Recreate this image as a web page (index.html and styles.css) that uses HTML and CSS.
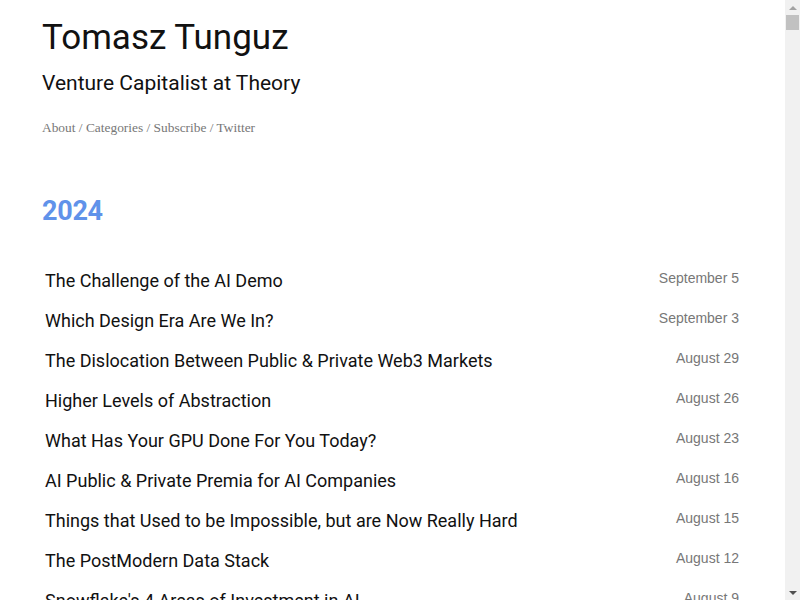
FILE: index.html
```html
<!DOCTYPE html>
<html>
<head>
	<title>Tomasz Tunguz</title>
	<link rel="stylesheet" href="styles.css">
</head>
<body>
	<div class="viewport">
		<div class="page">
			<header class="masthead">
				<h1 class="site-title">Tomasz Tunguz</h1>
				<p class="site-tagline">Venture Capitalist at Theory</p>
				<nav class="site-nav">
					<a href="#">About</a> / <a href="#">Categories</a> / <a href="#">Subscribe</a> / <a href="#">Twitter</a>
				</nav>
			</header>

			<section class="year">
				<h2 class="year-title">2024</h2>
				<ul class="posts">
					<li class="post"><a href="#">The Challenge of the AI Demo</a><span class="post-date">September 5</span></li>
					<li class="post"><a href="#">Which Design Era Are We In?</a><span class="post-date">September 3</span></li>
					<li class="post"><a href="#">The Dislocation Between Public &amp; Private Web3 Markets</a><span class="post-date">August 29</span></li>
					<li class="post"><a href="#">Higher Levels of Abstraction</a><span class="post-date">August 26</span></li>
					<li class="post"><a href="#">What Has Your GPU Done For You Today?</a><span class="post-date">August 23</span></li>
					<li class="post"><a href="#">AI Public &amp; Private Premia for AI Companies</a><span class="post-date">August 16</span></li>
					<li class="post"><a href="#">Things that Used to be Impossible, but are Now Really Hard</a><span class="post-date">August 15</span></li>
					<li class="post"><a href="#">The PostModern Data Stack</a><span class="post-date">August 12</span></li>
					<li class="post"><a href="#">Snowflake's 4 Areas of Investment in AI</a><span class="post-date">August 9</span></li>
					<li class="post"><a href="#">The Tail That Wags the Dog</a><span class="post-date">August 7</span></li>
					<li class="post"><a href="#">How Many Startups Raise a Series A?</a><span class="post-date">August 5</span></li>
					<li class="post"><a href="#">The Rise of the Small Model</a><span class="post-date">August 1</span></li>
				</ul>
			</section>
		</div>
	</div>
	<div class="scrollbar">
		<span class="scroll-arrow up"></span>
		<span class="scroll-thumb"></span>
		<span class="scroll-track"></span>
		<span class="scroll-arrow down"></span>
	</div>
</body>
</html>
```

FILE: styles.css
```css
* {
	box-sizing: border-box;
	margin: 0;
	padding: 0;
}

html, body {
	height: 100%;
	overflow: hidden;
}

body {
	display: flex;
	background-color: #fff;
	color: #111;
	font-family: 'Roboto', 'Noto Sans', sans-serif;
}

a {
	color: inherit;
	text-decoration: none;
}

.viewport {
	flex: 1;
	height: 100%;
	overflow: hidden;
}

.page {
	max-width: 701px;
	margin: 0 auto;
	padding-bottom: 60px;
}

.masthead {
	padding-top: 15px;
}

.site-title {
	font-size: 35px;
	font-weight: 400;
	line-height: 46px;
	color: #111;
}

.site-tagline {
	font-size: 21px;
	line-height: 28px;
	margin-top: 8px;
	color: #111;
}

.site-nav {
	font-family: 'Liberation Serif', 'Times New Roman', serif;
	font-size: 13.4px;
	color: #777;
	margin-top: 23px;
}

.year {
	margin-top: 60px;
}

.year-title {
	font-size: 27px;
	font-weight: 700;
	color: #6092ea;
	letter-spacing: -0.3px;
	line-height: 30px;
}

.posts {
	list-style: none;
	margin-top: 43px;
}

.post {
	display: flex;
	justify-content: space-between;
	align-items: flex-start;
	padding: 0 4px 0 3px;
	height: 40px;
}

.post a {
	font-size: 18px;
	line-height: 24px;
	color: #111;
}

.post-date {
	font-family: 'Liberation Sans', Arial, sans-serif;
	font-size: 14px;
	line-height: 20px;
	margin-top: -1px;
	color: #777;
}

/* stand-in for the browser scrollbar */
.scrollbar {
	width: 15px;
	height: 100%;
	background-color: #f1f1f1;
	display: flex;
	flex-direction: column;
	align-items: center;
}

.scroll-arrow {
	width: 15px;
	height: 15px;
	display: flex;
	align-items: center;
	justify-content: center;
}

.scroll-arrow::before {
	content: "";
	border-left: 4px solid transparent;
	border-right: 4px solid transparent;
}

.scroll-arrow.up::before {
	border-bottom: 4px solid #a3a3a3;
}

.scroll-arrow.down::before {
	border-top: 4px solid #505050;
}

.scroll-thumb {
	width: 13px;
	height: 15px;
	background-color: #c1c1c1;
}

.scroll-track {
	flex: 1;
}
```
